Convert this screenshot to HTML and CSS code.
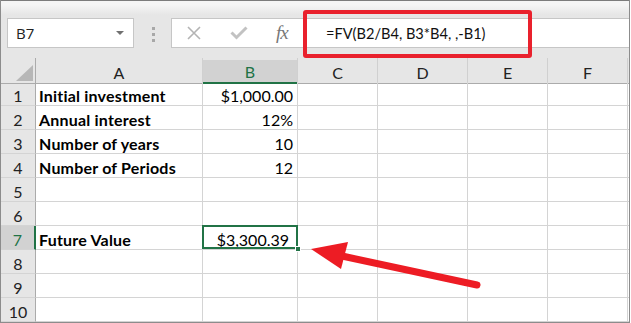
FILE: index.html
```html
<!DOCTYPE html>
<html lang="en">
<head>
  <meta charset="UTF-8">
  <title>FV formula</title>
  <link rel="stylesheet" href="styles.css">
</head>
<body>

  <div class="sheet">

    <!-- formula bar -->
    <div class="toolbar">
      <div class="namebox">
        <span>B7</span>
        <span class="caret"></span>
      </div>
      <div class="grip"><i></i><i></i><i></i></div>
      <div class="fxbar">
        <div class="fxbtns">
          <svg class="ico" width="16" height="16" viewBox="0 0 16 16">
            <path d="M2 2 L14 14 M14 2 L2 14" stroke="#b4b4b4" stroke-width="1.6" fill="none"/>
          </svg>
          <svg class="ico" width="18" height="14" viewBox="0 0 18 14">
            <path d="M1.5 6.5 L6.5 11.5 L16.5 1.5" stroke="#c2c2c2" stroke-width="3" fill="none"/>
          </svg>
          <span class="fx">fx</span>
        </div>
        <div class="formula">=FV(B2/B4, B3*B4, ,-B1)</div>
      </div>
    </div>

    <!-- cells -->
    <div class="grid">
      <div class="corner"><span class="tri"></span></div>
      <div class="colhead">A</div>
      <div class="colhead on">B</div>
      <div class="colhead">C</div>
      <div class="colhead">D</div>
      <div class="colhead">E</div>
      <div class="colhead">F</div>
      <div class="colhead rest"></div>

      <div class="rowhead">1</div><div class="cell label">Initial investment</div><div class="cell num">$1,000.00</div><div class="cell"></div><div class="cell"></div><div class="cell"></div><div class="cell"></div><div class="cell rest"></div>
      <div class="rowhead">2</div><div class="cell label">Annual interest</div><div class="cell num">12%</div><div class="cell"></div><div class="cell"></div><div class="cell"></div><div class="cell"></div><div class="cell rest"></div>
      <div class="rowhead">3</div><div class="cell label">Number of years</div><div class="cell num">10</div><div class="cell"></div><div class="cell"></div><div class="cell"></div><div class="cell"></div><div class="cell rest"></div>
      <div class="rowhead">4</div><div class="cell label">Number of Periods</div><div class="cell num">12</div><div class="cell"></div><div class="cell"></div><div class="cell"></div><div class="cell"></div><div class="cell rest"></div>
      <div class="rowhead">5</div><div class="cell"></div><div class="cell"></div><div class="cell"></div><div class="cell"></div><div class="cell"></div><div class="cell"></div><div class="cell rest"></div>
      <div class="rowhead">6</div><div class="cell"></div><div class="cell"></div><div class="cell"></div><div class="cell"></div><div class="cell"></div><div class="cell"></div><div class="cell rest"></div>
      <div class="rowhead on">7</div><div class="cell label">Future Value</div><div class="cell num sel">$3,300.39<span class="handle"></span></div><div class="cell"></div><div class="cell"></div><div class="cell"></div><div class="cell"></div><div class="cell rest"></div>
      <div class="rowhead">8</div><div class="cell"></div><div class="cell"></div><div class="cell"></div><div class="cell"></div><div class="cell"></div><div class="cell"></div><div class="cell rest"></div>
      <div class="rowhead">9</div><div class="cell"></div><div class="cell"></div><div class="cell"></div><div class="cell"></div><div class="cell"></div><div class="cell"></div><div class="cell rest"></div>
      <div class="rowhead">10</div><div class="cell"></div><div class="cell"></div><div class="cell"></div><div class="cell"></div><div class="cell"></div><div class="cell"></div><div class="cell rest"></div>
    </div>

    <!-- annotations -->
    <div class="callout"></div>
    <svg class="arrow" width="631" height="323" viewBox="0 0 631 323">
      <line x1="342" y1="256" x2="477" y2="285" stroke="#ed1c24" stroke-width="7" stroke-linecap="round"/>
      <polygon points="311,249 348,242 341,269" fill="#ed1c24"/>
    </svg>

  </div>

</body>
</html>
```

FILE: styles.css
```css
* {
  box-sizing: border-box;
}

body {
  margin: 0;
  background: #fff;
  font-family: 'Lato', 'Liberation Sans', sans-serif;
  color: #000;
}

.sheet {
  position: relative;
  width: 630px;
  height: 323px;
  overflow: hidden;
  border-left: 1px solid #8c8c8c;
  border-right: 1px solid #8c8c8c;
  border-bottom: 1px solid #8c8c8c;
}

/* formula bar */

.toolbar {
  display: flex;
  align-items: flex-start;
  height: 58px;
  padding-top: 17px;
  border-top: 1px solid #7c7c7c;
  background: linear-gradient(#f5f5f5 0, #f5f5f5 4px, #e6e6e6 14px);
}

.namebox {
  display: flex;
  align-items: center;
  justify-content: space-between;
  width: 127px;
  height: 30px;
  margin-left: 6px;
  padding: 0 9px 0 8px;
  background: #fff;
  border: 1px solid #c6c6c6;
  font-family: 'Open Sans', sans-serif;
  font-size: 15px;
  color: #222;
}

.caret {
  width: 0;
  height: 0;
  border-left: 4px solid transparent;
  border-right: 4px solid transparent;
  border-top: 4px solid #707070;
}

.grip {
  display: flex;
  flex-direction: column;
  gap: 3px;
  margin: 9px 0 0 18px;
}

.grip i {
  display: block;
  width: 3px;
  height: 3px;
  background: #a8a8a8;
}

.fxbar {
  display: flex;
  align-items: center;
  flex: 1;
  height: 30px;
  margin-left: 16px;
  background: #fff;
  border: 1px solid #c6c6c6;
  border-right: none;
}

.fxbtns {
  display: flex;
  align-items: center;
  width: 133px;
  height: 100%;
  padding-left: 14px;
}

.ico {
  display: block;
}

.ico + .ico {
  margin-left: 28px;
}

.fx {
  margin-left: 28px;
  font-family: 'Liberation Serif', serif;
  font-style: italic;
  font-size: 19px;
  color: #777;
  letter-spacing: -1px;
}

.formula {
  padding-left: 21px;
  font-size: 14.6px;
  color: #111;
}

/* grid */

.grid {
  display: grid;
  grid-template-columns: 35px 167px 95px 80px 90px 80px 80px 1fr;
  grid-auto-rows: 24px;
}

.corner,
.colhead {
  height: 26px;
  background: #e6e6e6;
  border-bottom: 1px solid #ababab;
}

.corner {
  position: relative;
  border-right: 1px solid #ababab;
}

.tri {
  position: absolute;
  right: 2px;
  bottom: 2px;
  width: 0;
  height: 0;
  border-left: 17px solid transparent;
  border-bottom: 16px solid #b7b7b7;
}

.colhead {
  display: flex;
  align-items: center;
  justify-content: center;
  padding-top: 3px;
  font-size: 16px;
  color: #222;
  border-right: 1px solid #d0d0d0;
  box-shadow: inset 0 2px 0 #e6e6e6;
}

.colhead.on {
  background: #d2d2d2;
  color: #217346;
  border-bottom: 2px solid #217346;
  box-shadow: inset 0 2px 0 #e6e6e6;
}

.colhead.rest {
  border-right: none;
}

.rowhead {
  display: flex;
  align-items: center;
  justify-content: center;
  padding-top: 3px;
  font-size: 16px;
  color: #222;
  background: #e6e6e6;
  border-right: 1px solid #ababab;
  border-bottom: 1px solid #d4d4d4;
}

.rowhead.on {
  background: #d2d2d2;
  color: #217346;
  border-right: 2px solid #217346;
}

.cell {
  display: flex;
  align-items: center;
  padding: 3px 4px 0 3px;
  font-size: 16px;
  border-right: 1px solid #d4d4d4;
  border-bottom: 1px solid #d4d4d4;
  white-space: nowrap;
}

.cell.rest {
  border-right: none;
}

.label {
  font-weight: bold;
  letter-spacing: 0.2px;
}

.num {
  justify-content: flex-end;
}

.sel {
  position: relative;
  padding-right: 8px;
}

.sel::before {
  content: "";
  position: absolute;
  left: -1px;
  top: -1px;
  right: -1px;
  bottom: 0;
  border: 2px solid #217346;
}

.handle {
  position: absolute;
  right: -4px;
  bottom: -3px;
  width: 6px;
  height: 6px;
  background: #217346;
  border: 1px solid #fff;
}

/* annotations */

.callout {
  position: absolute;
  left: 302px;
  top: 10px;
  width: 229px;
  height: 48px;
  border: 4px solid #e9212d;
  border-radius: 3px;
}

.arrow {
  position: absolute;
  left: -1px;
  top: 0;
  pointer-events: none;
}
```
